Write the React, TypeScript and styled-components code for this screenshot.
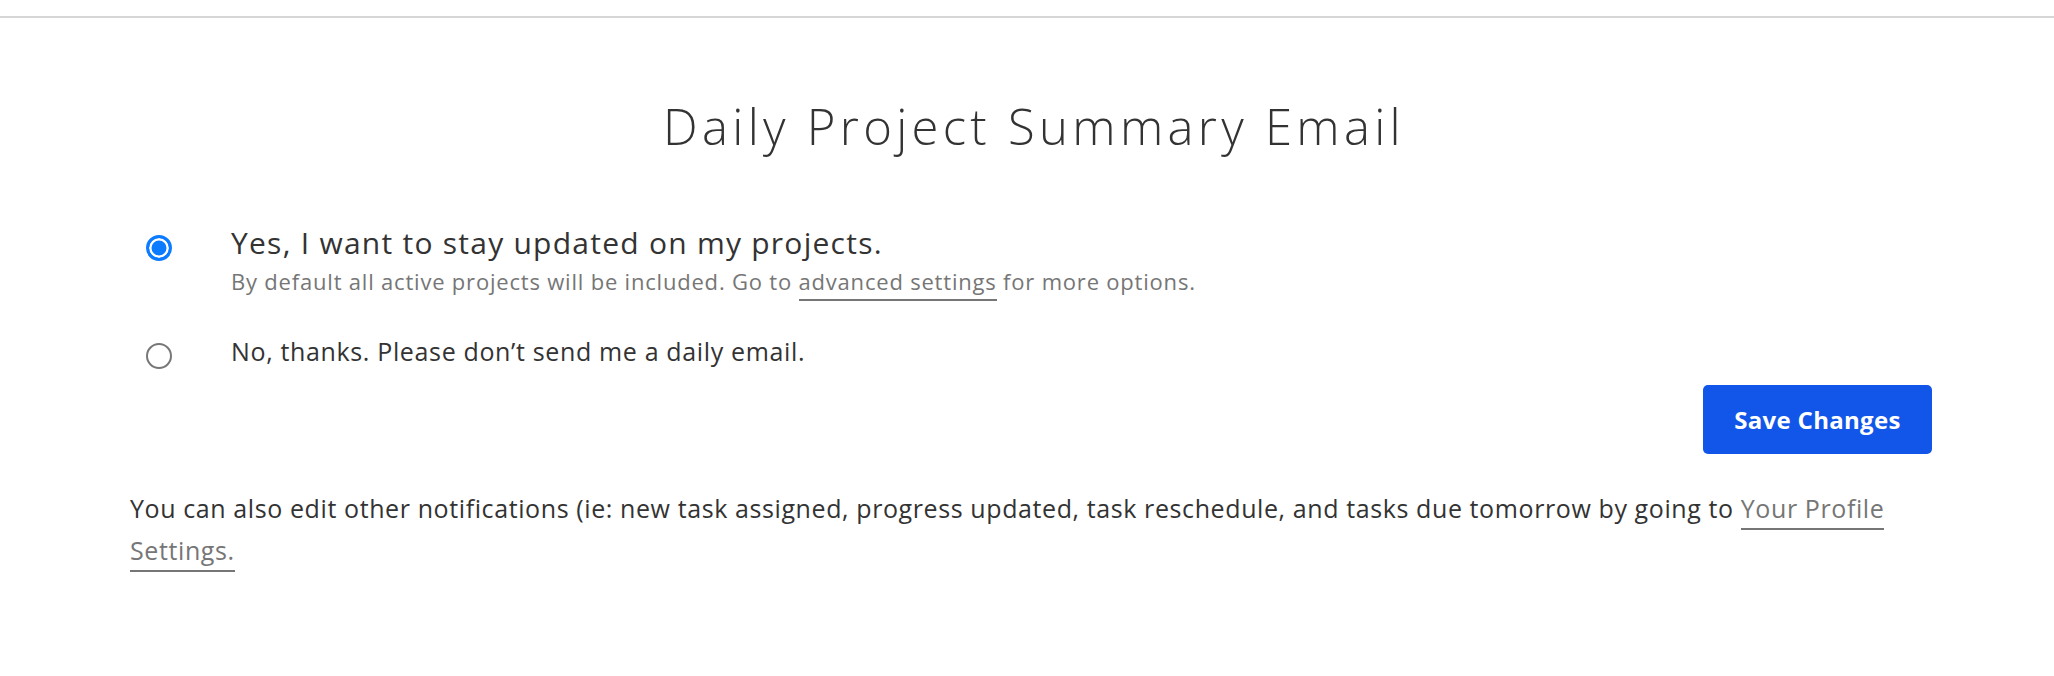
import React, { useState } from "react";
import styled, { createGlobalStyle } from "styled-components";

const FONT = `"Open Sans", "Lato", "Liberation Sans", sans-serif`;

const GlobalStyle = createGlobalStyle`
  html, body {
    margin: 0;
    padding: 0;
    background: #ffffff;
    font-family: ${FONT};
    color: #333333;
  }
`;

const Page = styled.div`
  padding-top: 16px;
`;

const Section = styled.section`
  border-top: 2px solid #d6d6d6;
  padding: 0 122px 60px 130px;
  display: flex;
  flex-direction: column;
`;

const Title = styled.h1`
  margin: 79px 0 0;
  padding-left: 6px;
  text-align: center;
  font-size: 49px;
  line-height: 58px;
  font-weight: 300;
  letter-spacing: 4.3px;
  color: #333333;
`;

const Options = styled.div`
  margin-top: 70px;
  display: flex;
  flex-direction: column;
  gap: 42px;
`;

const OptionRow = styled.label`
  display: grid;
  grid-template-columns: 26px 1fr;
  column-gap: 59px;
  padding-left: 16px;
  cursor: pointer;
`;

const Radio = styled.input.attrs({ type: "radio" })<{ $lineHeight: number }>`
  appearance: none;
  margin: 0;
  margin-top: ${(p) => (p.$lineHeight - 26) / 2 + 5}px;
  width: 26px;
  height: 26px;
  border-radius: 50%;
  border: 2px solid #777777;
  background: #ffffff;
  box-sizing: border-box;
  cursor: pointer;

  &:checked {
    border: 3px solid #0b7bff;
    background: #0b7bff;
    box-shadow: inset 0 0 0 2.5px #ffffff;
  }
`;

const LabelText = styled.div<{ $size: number; $lineHeight: number; $spacing: number }>`
  font-size: ${(p) => p.$size}px;
  line-height: ${(p) => p.$lineHeight}px;
  letter-spacing: ${(p) => p.$spacing}px;
  color: #333333;
`;

const Hint = styled.div`
  margin-top: 7px;
  font-size: 22px;
  line-height: 26px;
  letter-spacing: 0.8px;
  color: #767676;
`;

const HintLink = styled.a`
  color: #767676;
  text-decoration: none;
  border-bottom: 2px solid #767676;
  padding-bottom: 3px;
`;

const SaveButton = styled.button`
  align-self: flex-end;
  margin-top: 16px;
  width: 229px;
  height: 69px;
  border: none;
  border-radius: 5px;
  background: #1155e9;
  color: #ffffff;
  font-family: ${FONT};
  font-weight: 700;
  font-size: 24px;
  letter-spacing: 0.3px;
  cursor: pointer;
`;

const Footnote = styled.p`
  margin: 33px 0 0;
  font-size: 25px;
  line-height: 42px;
  letter-spacing: 0.6px;
  color: #333333;
`;

const FootLink = styled.a`
  color: #767676;
  text-decoration: none;
  border-bottom: 2px solid #767676;
  padding-bottom: 3px;
`;

export default function App() {
  const [choice, setChoice] = useState<"yes" | "no">("yes");
  return (
    <Page>
      <GlobalStyle />
      <Section>
        <Title>Daily Project Summary Email</Title>
        <Options>
          <OptionRow>
            <Radio
              name="daily"
              $lineHeight={36}
              checked={choice === "yes"}
              onChange={() => setChoice("yes")}
            />
            <div>
              <LabelText $size={30} $lineHeight={36} $spacing={1.25}>
                Yes, I want to stay updated on my projects.
              </LabelText>
              <Hint>
                By default all active projects will be included. Go to{" "}
                <HintLink href="#">advanced settings</HintLink> for more options.
              </Hint>
            </div>
          </OptionRow>
          <OptionRow>
            <Radio
              name="daily"
              $lineHeight={30}
              checked={choice === "no"}
              onChange={() => setChoice("no")}
            />
            <LabelText $size={25} $lineHeight={30} $spacing={0.65}>
              No, thanks. Please don’t send me a daily email.
            </LabelText>
          </OptionRow>
        </Options>
        <SaveButton>Save Changes</SaveButton>
        <Footnote>
          You can also edit other notifications (ie: new task assigned, progress updated, task
          reschedule, and tasks due tomorrow by going to{" "}
          <FootLink href="#">Your Profile</FootLink> <FootLink href="#">Settings.</FootLink>
        </Footnote>
      </Section>
    </Page>
  );
}
